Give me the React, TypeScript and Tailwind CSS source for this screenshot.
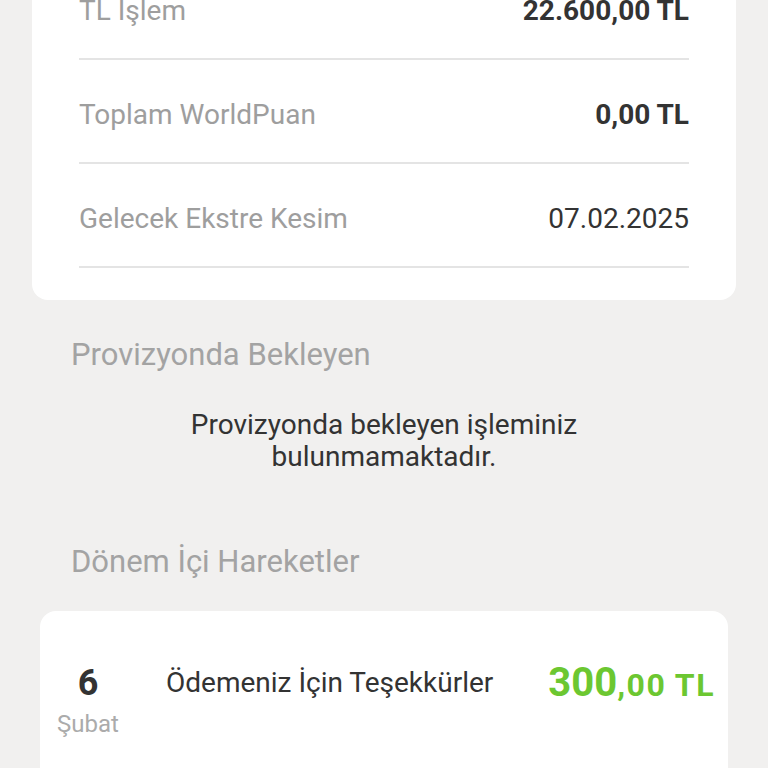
import React from "react";

type Row = { label: string; value: string; bold?: boolean };

const summary: Row[] = [
  { label: "TL İşlem", value: "22.600,00 TL", bold: true },
  { label: "Toplam WorldPuan", value: "0,00 TL", bold: true },
  { label: "Gelecek Ekstre Kesim", value: "07.02.2025" },
];

function SummaryRow({ label, value, bold }: Row) {
  return (
    <div className="flex h-[104px] items-center justify-between border-b-2 border-[#e4e4e4] pt-2">
      <span className="text-[28px] text-[#9e9e9e]">{label}</span>
      <span className={`text-[28px] text-[#333333] ${bold ? "font-bold" : ""}`}>{value}</span>
    </div>
  );
}

function SectionTitle({ children }: { children: React.ReactNode }) {
  return <h2 className="px-[71px] text-[31px] leading-[36px] text-[#a3a3a3]">{children}</h2>;
}

export default function App() {
  return (
    <div className="h-[768px] w-[768px] overflow-hidden bg-[#f1f0ef] font-['Roboto',sans-serif]">
      <div className="mx-8 -mt-[44px] rounded-b-2xl bg-white px-[47px] pb-8">
        {summary.map((r) => (
          <SummaryRow key={r.label} {...r} />
        ))}
      </div>

      <div className="mt-[37px]">
        <SectionTitle>Provizyonda Bekleyen</SectionTitle>
      </div>

      <p className="mt-[36px] text-center text-[28px] leading-[32px] text-[#333333]">
        Provizyonda bekleyen işleminiz
        <br />
        bulunmamaktadır.
      </p>

      <div className="mt-[71px]">
        <SectionTitle>Dönem İçi Hareketler</SectionTitle>
      </div>

      <div className="mx-10 mt-[31px] rounded-t-2xl bg-white pt-[52px] pr-[13px] pb-10">
        <div className="flex items-start">
          <div className="flex w-[96px] flex-col items-center">
            <span className="text-[36px] font-bold leading-[40px] text-[#333333]">6</span>
            <span className="mt-[7px] text-[24px] leading-[28px] text-[#ababab]">Şubat</span>
          </div>
          <span className="ml-[30px] flex-1 text-[28px] leading-[40px] text-[#333333]">
            Ödemeniz İçin Teşekkürler
          </span>
          <span className="flex items-baseline font-bold leading-[40px] text-[#6cc731]">
            <span className="text-[40px]">300</span>
            <span className="text-[32px] tracking-[1.5px]">,00 TL</span>
          </span>
        </div>
      </div>
    </div>
  );
}
